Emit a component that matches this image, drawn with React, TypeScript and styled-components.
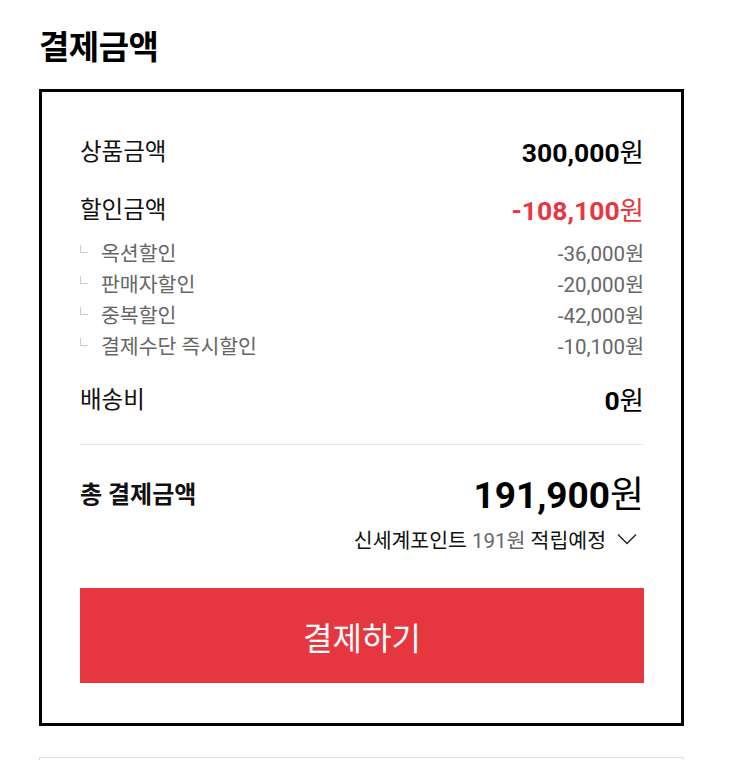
import React from "react";
import styled, { createGlobalStyle } from "styled-components";

const GlobalStyle = createGlobalStyle`
  html, body {
    margin: 0;
    padding: 0;
    background: #fff;
  }
  body {
    font-family: Roboto, "Noto Sans CJK KR", sans-serif;
    color: #000;
  }
`;

const Page = styled.div`
  padding: 28px 0 0 39px;
`;

const Title = styled.h2`
  margin: 0 0 21px;
  font-size: 33px;
  line-height: 40px;
  font-weight: 700;
  letter-spacing: -0.5px;
`;

const Box = styled.section`
  box-sizing: border-box;
  width: 645px;
  border: 3px solid #000;
  padding: 42px 37px 40px 38px;
`;

const Row = styled.div<{ $gap?: number; $h?: number }>`
  display: flex;
  justify-content: space-between;
  align-items: center;
  height: ${(p) => p.$h ?? 32}px;
  margin-top: ${(p) => p.$gap ?? 0}px;
`;

const Label = styled.span<{ $bold?: boolean }>`
  font-size: ${(p) => (p.$bold ? 24 : 23.5)}px;
  font-weight: ${(p) => (p.$bold ? 700 : 400)};
  color: #111;
`;

const Amount = styled.span<{ $red?: boolean; $size?: number }>`
  font-size: ${(p) => p.$size ?? 26.5}px;
  font-weight: 700;
  color: ${(p) => (p.$red ? "#e63740" : "#000")};
  white-space: nowrap;
`;

const Won = styled.span`
  font-weight: 400;
`;

const SubList = styled.ul`
  list-style: none;
  margin: 12px 0 0;
  padding: 0;
`;

const SubItem = styled.li`
  display: flex;
  justify-content: space-between;
  align-items: center;
  height: 31px;
  font-size: 20.5px;
  color: #666;
`;

const SubName = styled.span`
  display: flex;
  align-items: center;
`;

const Corner = styled.i`
  display: block;
  width: 7px;
  height: 7px;
  margin: -6px 13px 0 0;
  border-left: 1px solid #ccc;
  border-bottom: 1px solid #ccc;
`;

const Divider = styled.hr`
  margin: 30px 0 0;
  border: 0;
  border-top: 1px solid #e6e6e6;
`;

const Points = styled.div`
  display: flex;
  justify-content: flex-end;
  align-items: center;
  height: 24px;
  margin-top: 15px;
  font-size: 20.5px;
  color: #111;
  white-space: pre;
`;

const Muted = styled.span`
  color: #666;
`;

const Chevron = styled.svg`
  margin: 0 7px 0 11px;
`;

const PayButton = styled.button`
  display: block;
  width: 100%;
  height: 95px;
  margin-top: 37px;
  border: 0;
  background: #e63740;
  color: #fff;
  font-family: Roboto, "Noto Sans CJK KR", sans-serif;
  font-size: 32px;
  cursor: pointer;
`;

const NextBox = styled.div`
  box-sizing: border-box;
  width: 645px;
  height: 60px;
  margin-top: 31px;
  border: 1px solid #e0e0e0;
`;

const discounts = [
  { name: "옥션할인", value: "-36,000" },
  { name: "판매자할인", value: "-20,000" },
  { name: "중복할인", value: "-42,000" },
  { name: "결제수단 즉시할인", value: "-10,100" },
];

export default function App() {
  return (
    <Page>
      <GlobalStyle />
      <Title>결제금액</Title>
      <Box>
        <Row>
          <Label>상품금액</Label>
          <Amount>
            300,000<Won>원</Won>
          </Amount>
        </Row>
        <Row $gap={26}>
          <Label>할인금액</Label>
          <Amount $red>
            -108,100<Won>원</Won>
          </Amount>
        </Row>
        <SubList>
          {discounts.map((d) => (
            <SubItem key={d.name}>
              <SubName>
                <Corner />
                {d.name}
              </SubName>
              <span>{d.value}원</span>
            </SubItem>
          ))}
        </SubList>
        <Row $gap={22}>
          <Label>배송비</Label>
          <Amount>
            0<Won>원</Won>
          </Amount>
        </Row>
        <Divider />
        <Row $gap={27} $h={40}>
          <Label $bold>총 결제금액</Label>
          <Amount $size={37}>
            191,900<Won>원</Won>
          </Amount>
        </Row>
        <Points>
          <span>신세계포인트 </span>
          <Muted>191원</Muted>
          <span> 적립예정</span>
          <Chevron width="20" height="12" viewBox="0 0 20 12" fill="none">
            <polyline points="1,1.5 10,10.5 19,1.5" stroke="#222" strokeWidth="1.4" />
          </Chevron>
        </Points>
        <PayButton>결제하기</PayButton>
      </Box>
      <NextBox />
    </Page>
  );
}
